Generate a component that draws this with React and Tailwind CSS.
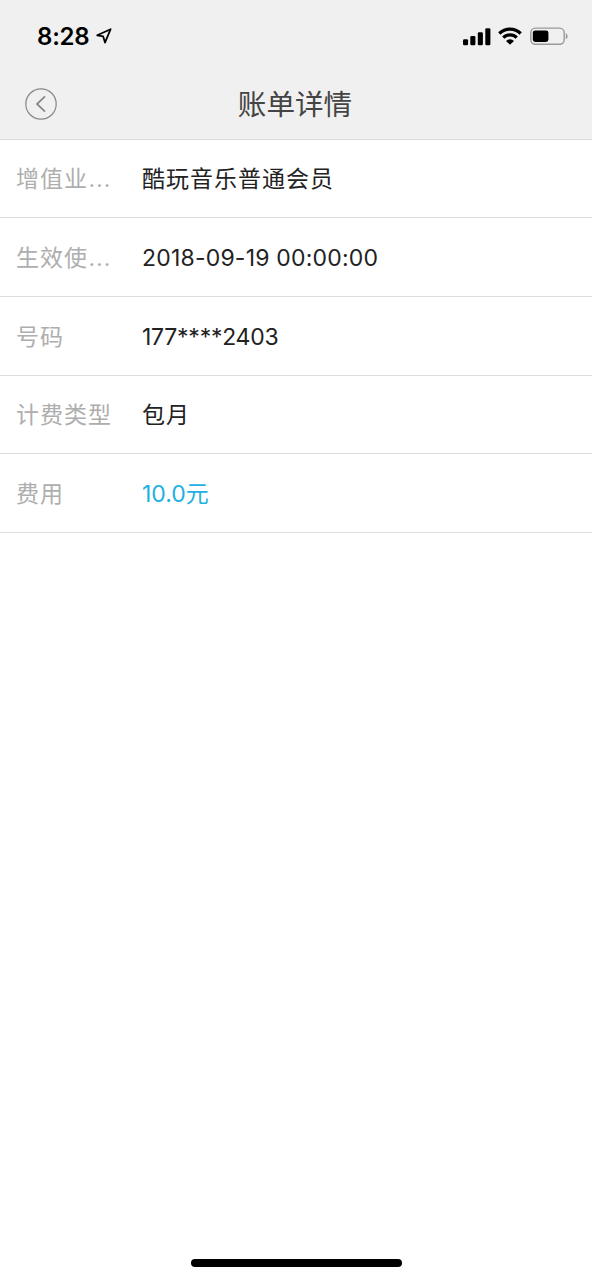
const rows = [
  { label: '增值业', clipped: true, value: '酷玩音乐普通会员', valueClass: 'pt-px text-[#222] tracking-[1px]' },
  { label: '生效使', clipped: true, value: '2018-09-19 00:00:00', valueClass: 'text-[#222] tracking-[0.2px]' },
  { label: '号码', value: '177****2403', valueClass: 'pt-px text-[#222] tracking-[-0.25px]' },
  { label: '计费类型', value: '包月', valueClass: 'pt-px text-[#222] tracking-[1px]' },
  { label: '费用', value: '10.0元', valueClass: 'pt-px text-[#1fb0e2]' },
];

const StatusBar = () => (
  <div className="h-[68px] pt-[5px] pl-[37px] pr-[23px] flex items-center justify-between text-black">
    <div className="flex items-center">
      <span className="text-[24px] font-semibold leading-none tracking-[-0.2px]">8:28</span>
      <svg className="ml-[6px] mb-px w-4 h-4" viewBox="0 0 16 16" fill="none" stroke="currentColor" strokeWidth="1.8" strokeLinejoin="round">
        <path d="M14.6 1.2 1.2 7.3 7.2 8.4 9 14.6Z" />
      </svg>
    </div>
    <div className="flex items-center">
      {/* Signal */}
      <svg className="w-[28px] h-[18px]" viewBox="0 0 28 18" fill="currentColor">
        <rect x="0" y="11.2" width="5.1" height="6.1" rx="1.3" />
        <rect x="7.3" y="8" width="5.1" height="9.3" rx="1.3" />
        <rect x="14.8" y="4.3" width="5.1" height="13" rx="1.3" />
        <rect x="22.3" y="0.3" width="5.1" height="17" rx="1.3" />
      </svg>
      {/* Wi-Fi */}
      <svg className="ml-[7px] mb-px w-6 h-[18px]" viewBox="0 0 24 18" fill="none" stroke="currentColor" strokeWidth="3.2">
        <path d="M1.3 6.5a15.1 15.1 0 0 1 21.4 0" />
        <path d="M5.3 10.7a9.5 9.5 0 0 1 13.4 0" />
        <path d="M8 13.9a5.7 5.7 0 0 1 8 0L12 17.8Z" fill="currentColor" stroke="none" />
      </svg>
      {/* Battery */}
      <svg className="ml-2 mb-px w-[39px] h-[18px]" viewBox="0 0 39 18">
        <rect x="0.8" y="1.1" width="33.4" height="16.2" rx="4.5" fill="none" stroke="#999" strokeWidth="1.4" />
        <rect x="2.8" y="3.4" width="15.6" height="11.6" rx="2.4" fill="#000" />
        <path d="M35.8 6.3c2.4.8 2.4 5.2 0 6Z" fill="#999" />
      </svg>
    </div>
  </div>
);

const NavBar = () => (
  <div className="grid grid-cols-[1fr_auto_1fr] items-center h-[71px] pl-[25px] pr-[27px]">
    <button className="w-8 h-8" aria-label="返回">
      <svg className="w-8 h-8" viewBox="0 0 32 32" fill="none" stroke="#888">
        <circle cx="16" cy="16" r="15.2" strokeWidth="1.2" />
        <path d="M20 8.3 12 16l8 7.7" strokeWidth="1.8" />
      </svg>
    </button>
    <h1 className="pt-[3px] text-[28.6px] leading-none text-[#444]">账单详情</h1>
  </div>
);

const App = () => {
  return (
    <div className="w-full h-screen flex flex-col bg-white font-['Inter','Noto_Sans_CJK_SC',sans-serif]">
      <header className="h-[139.5px] shrink-0 bg-[#f0f0f0] border-b border-[#d8d8d8]">
        <StatusBar />
        <NavBar />
      </header>

      <main className="flex-1">
        {rows.map((row) => (
          <div key={row.label} className="flex items-center h-[78.7px] pt-px pl-4 border-b border-[#dedede] text-[23px] leading-8">
            <span className="w-[126px] pt-px shrink-0 tracking-[1px] text-[#aeaeae]">
              {row.label}
              {row.clipped && <span className="text-[27px] leading-none font-light">…</span>}
            </span>
            <span className={row.valueClass}>{row.value}</span>
          </div>
        ))}
      </main>

      {/* Home indicator */}
      <div className="pb-[13px] flex justify-center">
        <div className="w-[211px] h-2 rounded-full bg-black" />
      </div>
    </div>
  );
};

export default App;
